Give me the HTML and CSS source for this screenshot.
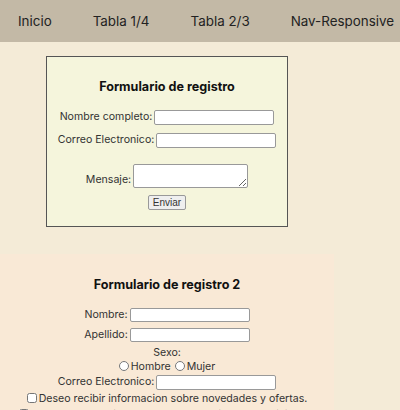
FILE: index.html
```html
<!DOCTYPE html>
<html lang="es">

<head>
    <meta charset="UTF-8">
    <meta name="viewport" content="width=device-width, initial-scale=1.0">
    <title>Formularios</title>

    <link rel="stylesheet" href="styles.css">
</head>

<body>

    <nav class="nav">
        <a href="#">Inicio</a>
        <a href="#">Tabla 1/4</a>
        <a href="#">Tabla 2/3</a>
        <a href="#">Nav-Responsive</a>
    </nav>

    <!-- Formulario 1 -->
    <section class="caja">
        <h3>Formulario de registro</h3>
        <form>
            <div class="fila"><label>Nombre completo:</label><input type="text" class="campo"></div>
            <div class="fila"><label>Correo Electronico:</label><input type="email" class="campo"></div>
            <div class="fila mensaje"><label>Mensaje:</label><textarea></textarea></div>
            <div class="fila enviar"><button type="button">Enviar</button></div>
        </form>
    </section>

    <!-- Formulario 2 -->
    <section class="registro2">
        <h3>Formulario de registro 2</h3>
        <form>
            <div class="linea alta"><label>Nombre:</label><input type="text" class="campo"></div>
            <div class="linea alta"><label>Apellido:</label><input type="text" class="campo"></div>
            <div class="linea sexo">Sexo:</div>
            <div class="linea radios">
                <input type="radio" name="sexo" class="radio">Hombre
                <input type="radio" name="sexo" class="radio">Mujer
            </div>
            <div class="linea correo"><label>Correo Electronico:</label><input type="email" class="campo"></div>
            <div class="linea check-row"><input type="checkbox" class="check">Deseo recibir informacion sobre novedades y ofertas.</div>
            <div class="linea check-row"><input type="checkbox" class="check">Declaro haber leido y acepto los terminos y condiciones.</div>
        </form>
    </section>

</body>
</html>
```

FILE: styles.css
```css
body {
    font-family: Inter, "Noto Sans", sans-serif;
    margin: 0;
    padding: 0;
    background-color: #f4ebd7;
    color: #333;
}

.nav {
    display: flex;
    align-items: center;
    gap: 41px;
    height: 42px;
    padding-left: 18px;
    background-color: #c3b9a6;
}

.nav a {
    color: #222;
    text-decoration: none;
    font-size: 13.4px;
    white-space: nowrap;
}

.caja {
    width: 240px;
    margin: 14px 0 0 46px;
    padding: 21px 0 16px;
    background-color: #f5f5dc;
    border: 1.5px solid #555;
    text-align: center;
}

h3 {
    margin: 0;
    font-size: 12.6px;
    line-height: 18px;
    color: #111;
}

.caja h3 {
    margin-bottom: 13px;
}

.fila {
    font-size: 10.6px;
    height: 16px;
    line-height: 16px;
    margin-bottom: 7px;
    white-space: nowrap;
}

.fila label {
    margin-right: 2px;
}

.campo {
    width: 120px;
    height: 15px;
    padding: 0 2px;
    box-sizing: border-box;
    border: 1px solid #999;
    border-radius: 2px;
    background: white;
    font-size: 10px;
    vertical-align: middle;
}

.mensaje {
    height: auto;
    margin-top: 16px;
    margin-bottom: 6px;
}

.enviar {
    margin-bottom: 0;
}

textarea {
    width: 115px;
    height: 24px;
    box-sizing: border-box;
    border: 1px solid #999;
    border-radius: 2px;
    vertical-align: bottom;
    resize: both;
}

button {
    height: 15px;
    padding: 0 4px;
    font-family: "Liberation Sans", sans-serif;
    font-size: 10px;
    color: #333;
    background-color: #efefef;
    border: 1px solid #999;
    border-radius: 2px;
    vertical-align: middle;
}

.registro2 {
    width: 334px;
    margin-top: 27px;
    padding-top: 22px;
    background-color: #f9e9d6;
    text-align: center;
}

.registro2 h3 {
    margin-bottom: 11px;
}

.linea {
    font-size: 10.6px;
    white-space: nowrap;
}

.linea label {
    margin-right: 2px;
}

.alta {
    height: 20px;
    line-height: 20px;
}

.sexo {
    height: 15px;
    line-height: 15px;
}

.radios {
    height: 13px;
    line-height: 13px;
}

.correo {
    height: 18px;
    line-height: 18px;
}

.check-row {
    height: 16px;
    line-height: 16px;
}

.alta .campo {
    height: 14px;
}

.radio, .check {
    width: 10px;
    height: 10px;
    margin: 0 2px 0 0;
    vertical-align: -1px;
}

.radios .radio + .radio {
    margin-left: 1px;
}
```
